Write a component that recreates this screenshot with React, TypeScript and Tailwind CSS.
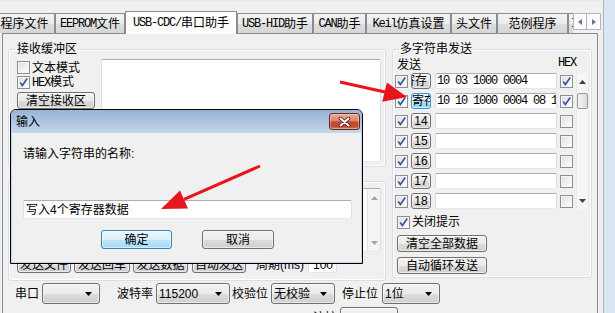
import React from "react";

// SimSun-like latin: 6px per char at 12px
const mono = "font-['Liberation_Mono',monospace] tracking-[-1.2px]";
const gray = "border-[#707070] bg-[linear-gradient(#f2f2f2_0%,#ebebeb_50%,#dddddd_51%,#cfcfcf_100%)]";
const blue = "border-[#3c7fb1] bg-[linear-gradient(#eaf6fd_0%,#d9f0fc_50%,#bee6fd_51%,#a7d9f5_100%)]";
const hot = "border-[#2b9be0] bg-[linear-gradient(#eaf8fe_0%,#d6effc_50%,#b4e1fa_51%,#9cd5f6_100%)]";

const M = ({ children }: { children: React.ReactNode }) => <span className={mono}>{children}</span>;

function Check({ on }: { on?: boolean }) {
  return (
    <span className="relative shrink-0 w-[13px] h-[13px] border border-[#8e8f8f] bg-[linear-gradient(135deg,#d9dcdf_0%,#f1f1f1_55%,#ffffff_100%)] shadow-[inset_0_0_0_1px_#f6f6f6]">
      {on && (
        <svg viewBox="0 0 11 11" className="absolute left-0 top-0 w-[11px] h-[11px]">
          <path d="M2.2 5.6 L4.4 8.6 L9.2 1.6" fill="none" stroke="#3b57a4" strokeWidth="1.7" />
        </svg>
      )}
    </span>
  );
}

function Btn({ children, className = "", tone = "gray" }: { children: React.ReactNode; className?: string; tone?: "gray" | "blue" | "hot" }) {
  const t = tone === "blue" ? blue : tone === "hot" ? hot : gray;
  return (
    <div className={`shrink-0 flex items-center justify-center whitespace-nowrap overflow-hidden border rounded-[3px] shadow-[inset_0_0_0_1px_rgba(255,255,255,0.55)] ${t} ${className}`}>
      {children}
    </div>
  );
}

function Combo({ text, className = "" }: { text?: string; className?: string }) {
  return (
    <div className={`shrink-0 h-[21px] flex items-center border rounded-[3px] pl-[2px] pr-[7px] shadow-[inset_0_0_0_1px_rgba(255,255,255,0.55)] ${gray} ${className}`}>
      <span className="flex-1 whitespace-nowrap">{text}</span>
      <svg width="7" height="4" viewBox="0 0 7 4">
        <path d="M0 0H7L3.5 4Z" fill="#000" />
      </svg>
    </div>
  );
}

function Arrow({ up, color = "#404040" }: { up?: boolean; color?: string }) {
  return (
    <svg width="7" height="4" viewBox="0 0 7 4">
      <path d={up ? "M3.5 0L7 4H0Z" : "M0 0H7L3.5 4Z"} fill={color} />
    </svg>
  );
}

function Tab({ children, className = "", active }: { children: React.ReactNode; className?: string; active?: boolean }) {
  return (
    <div
      className={`shrink-0 flex items-center justify-center whitespace-nowrap border border-b-0 border-[#898c95] ${
        active ? "h-[23px] bg-[#fcfcfc]" : "h-[20px] mb-px bg-[linear-gradient(#f3f3f3_0%,#ebebeb_50%,#dddddd_51%,#d6d6d6_100%)]"
      } ${className}`}
    >
      {children}
    </div>
  );
}

const groupBox = "border border-[#d5dfe5] rounded-[3px] shadow-[inset_0_0_0_1px_#ffffff]";
const textBox = "border border-[#abadb3] border-x-[#dbdfe6] border-b-[#e3e9ef] rounded-[2px] bg-white";

function Row({ btn, text, hex, tone }: { btn: React.ReactNode; text?: string; hex?: boolean; tone?: "gray" | "hot" }) {
  return (
    <div className="h-[16px] flex items-center">
      <Check on />
      <Btn tone={tone} className="ml-[3px] w-[20px] h-[16px]">
        {btn}
      </Btn>
      <div className={`ml-[4px] w-[122px] h-[16px] flex items-center pl-[1px] overflow-hidden whitespace-nowrap ${textBox}`}>
        <M>{text}</M>
      </div>
      <span className="ml-[3px] flex">
        <Check on={hex} />
      </span>
    </div>
  );
}

export default function App() {
  return (
    <div className="relative w-[615px] h-[313px] overflow-hidden flex bg-[#f0f0f0] text-black text-[12px] leading-[14px] font-['Liberation_Sans','Noto_Sans_CJK_SC',sans-serif]">
      <div className="w-[604px] flex flex-col border-r border-[#a9b4c2]">
        <div className="h-[11px] shrink-0 border-t border-[#e4e9f1]" />

        {/* tabs */}
        <div className="h-[23px] shrink-0 -mb-px relative z-10 flex items-end">
          <div className="w-[573px] h-[23px] overflow-hidden flex items-end">
            <Tab className="-ml-[6px] w-[61px]">程序文件</Tab>
            <Tab className="w-[70px]">
              <M>EEPROM</M>文件
            </Tab>
            <Tab active className="w-[112px]">
              <M>USB-CDC/</M>串口助手
            </Tab>
            <Tab className="w-[76px]">
              <M>USB-HID</M>助手
            </Tab>
            <Tab className="w-[53px]">
              <M>CAN</M>助手
            </Tab>
            <Tab className="w-[85px]">
              <M>Keil</M>仿真设置
            </Tab>
            <Tab className="w-[46px]">头文件</Tab>
            <Tab className="w-[71px]">范例程序</Tab>
            <Tab className="w-[60px] justify-start pl-[2px]">
              <M>I/O</M>配置
            </Tab>
          </div>
          <div className="flex mb-[4px]">
            <div className="w-[14px] h-[17px] flex items-center justify-center border border-[#b5b5b5] bg-[#fbfbfb]">
              <svg width="4" height="6" viewBox="0 0 4 6"><path d="M4 0V6L0 3Z" fill="#5a78b0" /></svg>
            </div>
            <div className="w-[14px] h-[17px] flex items-center justify-center border border-l-0 border-[#b5b5b5] bg-[#fbfbfb]">
              <svg width="4" height="6" viewBox="0 0 4 6"><path d="M0 0V6L4 3Z" fill="#5a78b0" /></svg>
            </div>
          </div>
        </div>

        {/* tab page */}
        <div className="ml-[2px] w-[596px] flex-1 border border-b-0 border-[#898c95] bg-[#f0f0f0] pl-[5px] pt-[8px] flex flex-col">
          <div className="flex gap-[6px]">
            {/* left column */}
            <div className="w-[378px] flex flex-col">
              <fieldset className={`h-[125px] ${groupBox}`}>
                <legend className="ml-[7px] px-[1px] leading-[14px]">接收缓冲区</legend>
                <div className="flex pl-[8px] pr-[4px] pt-[3px]">
                  <div className="w-[84px] flex flex-col">
                    <div className="h-[15px] mt-[1px] flex items-center gap-[2px]">
                      <Check />
                      <span>文本模式</span>
                    </div>
                    <div className="h-[15px] flex items-center gap-[2px]">
                      <Check on />
                      <span>
                        <M>HEX</M>模式
                      </span>
                    </div>
                    <Btn className="mt-[2px] w-[78px] h-[17px]">清空接收区</Btn>
                  </div>
                  <div className={`flex-1 h-[103px] ${textBox}`} />
                </div>
              </fieldset>

              <fieldset className={`mt-[7px] h-[107px] ${groupBox}`}>
                <legend className="ml-[7px] px-[1px] leading-[14px]">发送缓冲区</legend>
                <div className="pl-[8px] pr-[4px] flex flex-col">
                  <div className={`h-[64px] flex justify-end ${textBox}`}>
                    <div className="w-[13px] bg-[#f4f4f4] border-l border-[#e6e6e6] flex flex-col items-center">
                      <div className="h-[17px] flex items-center">
                        <Arrow up color="#a3a3a3" />
                      </div>
                      <div className="flex-1" />
                      <div className="h-[17px] flex items-center">
                        <Arrow color="#a3a3a3" />
                      </div>
                    </div>
                  </div>
                  <div className="mt-[4px] h-[17px] flex items-center">
                    <Btn className="w-[54px] h-[17px]">发送文件</Btn>
                    <Btn className="ml-[3px] w-[56px] h-[17px]">发送回车</Btn>
                    <Btn className="ml-[3px] w-[55px] h-[17px]">发送数据</Btn>
                    <Btn className="ml-[4px] w-[54px] h-[17px]">自动发送</Btn>
                    <span className="ml-[10px]">周期(ms)</span>
                    <div className={`ml-[4px] w-[29px] h-[17px] flex items-center pl-[4px] ${textBox}`}>100</div>
                  </div>
                </div>
              </fieldset>
            </div>

            {/* right column */}
            <fieldset className={`w-[200px] h-[236px] ${groupBox}`}>
              <legend className="ml-[6px] px-[1px] leading-[14px]">多字符串发送</legend>
              <div className="pl-[2px] flex flex-col">
                <div className="h-[16px] flex items-end">
                  <span className="w-[163px] pl-[2px]">发送</span>
                  <span className="mb-[2px]">
                    <M>HEX</M>
                  </span>
                </div>
                <div className="mt-[1px] flex">
                  <div className="flex flex-col gap-[4px]">
                    <Row btn={<span className="-translate-x-[6px]">寄存</span>} text="10 03 1000 0004" hex />
                    <Row tone="hot" btn={<span className="translate-x-[3px]">寄存</span>} text="10 10 1000 0004 08 10 00 00 00 00" hex />
                    <Row btn="14" />
                    <Row btn="15" />
                    <Row btn="16" />
                    <Row btn="17" />
                    <Row btn="18" />
                  </div>
                  <div className="ml-[3px] w-[13px] h-[136px] bg-[#f6f6f6] border-x border-[#ebebeb] flex flex-col items-center">
                    <div className="h-[17px] flex items-center">
                      <Arrow up />
                    </div>
                    <div className="mt-[3px] w-[11px] h-[16px] rounded-[2px] border border-[#979797] bg-[linear-gradient(90deg,#f4f4f4,#dcdcdc)]" />
                    <div className="flex-1" />
                    <div className="h-[17px] flex items-center">
                      <Arrow />
                    </div>
                  </div>
                </div>
                <div className="mt-[6px] ml-[2px] h-[14px] flex items-center gap-[2px]">
                  <Check on />
                  <span>关闭提示</span>
                </div>
                <Btn className="mt-[6px] ml-[2px] w-[90px] h-[17px]">清空全部数据</Btn>
                <Btn className="mt-[5px] ml-[2px] w-[90px] h-[17px]">自动循环发送</Btn>
              </div>
            </fieldset>
          </div>

          {/* serial settings */}
          <div className="mt-[2px] h-[21px] flex items-center">
            <span className="ml-[7px]">串口</span>
            <Combo className="ml-[3px] w-[58px]" />
            <span className="ml-[17px]">波特率</span>
            <Combo className="ml-[3px] w-[74px]" text="115200" />
            <span className="ml-[2px]">校验位</span>
            <Combo className="ml-[3px] w-[64px]" text="无校验" />
            <span className="ml-[7px]">停止位</span>
            <Combo className="ml-[4px] w-[58px]" text="1位" />
          </div>
          <div className="mt-[3px] h-[21px] flex items-center">
            <span className="ml-[305px]">流控</span>
            <Combo className="ml-[3px] w-[58px]" />
          </div>
        </div>
      </div>
      <div className="flex-1 bg-[#dae6f4]" />

      {/* input dialog */}
      <div className="absolute left-[10px] top-[109px] z-20 w-[353px] h-[155px] flex flex-col border border-black rounded-t-[6px] bg-[#c2d5eb]">
        <div className="h-[23px] shrink-0 flex items-center pl-[5px] pr-[2px] rounded-t-[5px] bg-[linear-gradient(#97b3d5,#c4d7ec)]">
          <span className="flex-1">输入</span>
          <div className="w-[31px] h-[17px] flex items-center justify-center rounded-[3px] border border-[#5f2a1f] bg-[linear-gradient(#e9a797_0%,#dc8670_45%,#c84b30_52%,#c3472d_80%,#d8745a_100%)] shadow-[inset_0_0_0_1px_rgba(255,255,255,0.35)]">
            <svg width="13" height="10" viewBox="0 0 13 10">
              <path d="M2.5 1.5L10.5 8.5M10.5 1.5L2.5 8.5" stroke="#3a1c14" strokeWidth="3.6" strokeLinecap="round" />
              <path d="M2.5 1.5L10.5 8.5M10.5 1.5L2.5 8.5" stroke="#ffffff" strokeWidth="2" strokeLinecap="round" />
            </svg>
          </div>
        </div>
        <div className="mx-px mb-px flex-1 bg-[#f0f0f0] pl-[11px] pt-[14px] flex flex-col">
          <span>请输入字符串的名称:</span>
          <div className={`mt-[39px] w-[329px] h-[19px] flex items-center pl-[2px] ${textBox}`}>写入4个寄存器数据</div>
          <div className="mt-[11px] flex">
            <Btn tone="blue" className="ml-[78px] w-[71px] h-[19px]">确定</Btn>
            <Btn className="ml-[30px] w-[72px] h-[19px]">取消</Btn>
          </div>
        </div>
      </div>

      {/* red annotation arrows */}
      <svg className="absolute left-0 top-0 z-30 pointer-events-none" width="615" height="313" viewBox="0 0 615 313">
        <path d="M340 82L385 92" stroke="#e8151f" strokeWidth="3" />
        <path d="M407 97L382.2 101.8L386.9 82.5Z" fill="#e8151f" />
        <path d="M260 166L184 199.4" stroke="#e8151f" strokeWidth="3" />
        <path d="M161 209L188 208.5L180 190.5Z" fill="#e8151f" />
      </svg>
    </div>
  );
}
